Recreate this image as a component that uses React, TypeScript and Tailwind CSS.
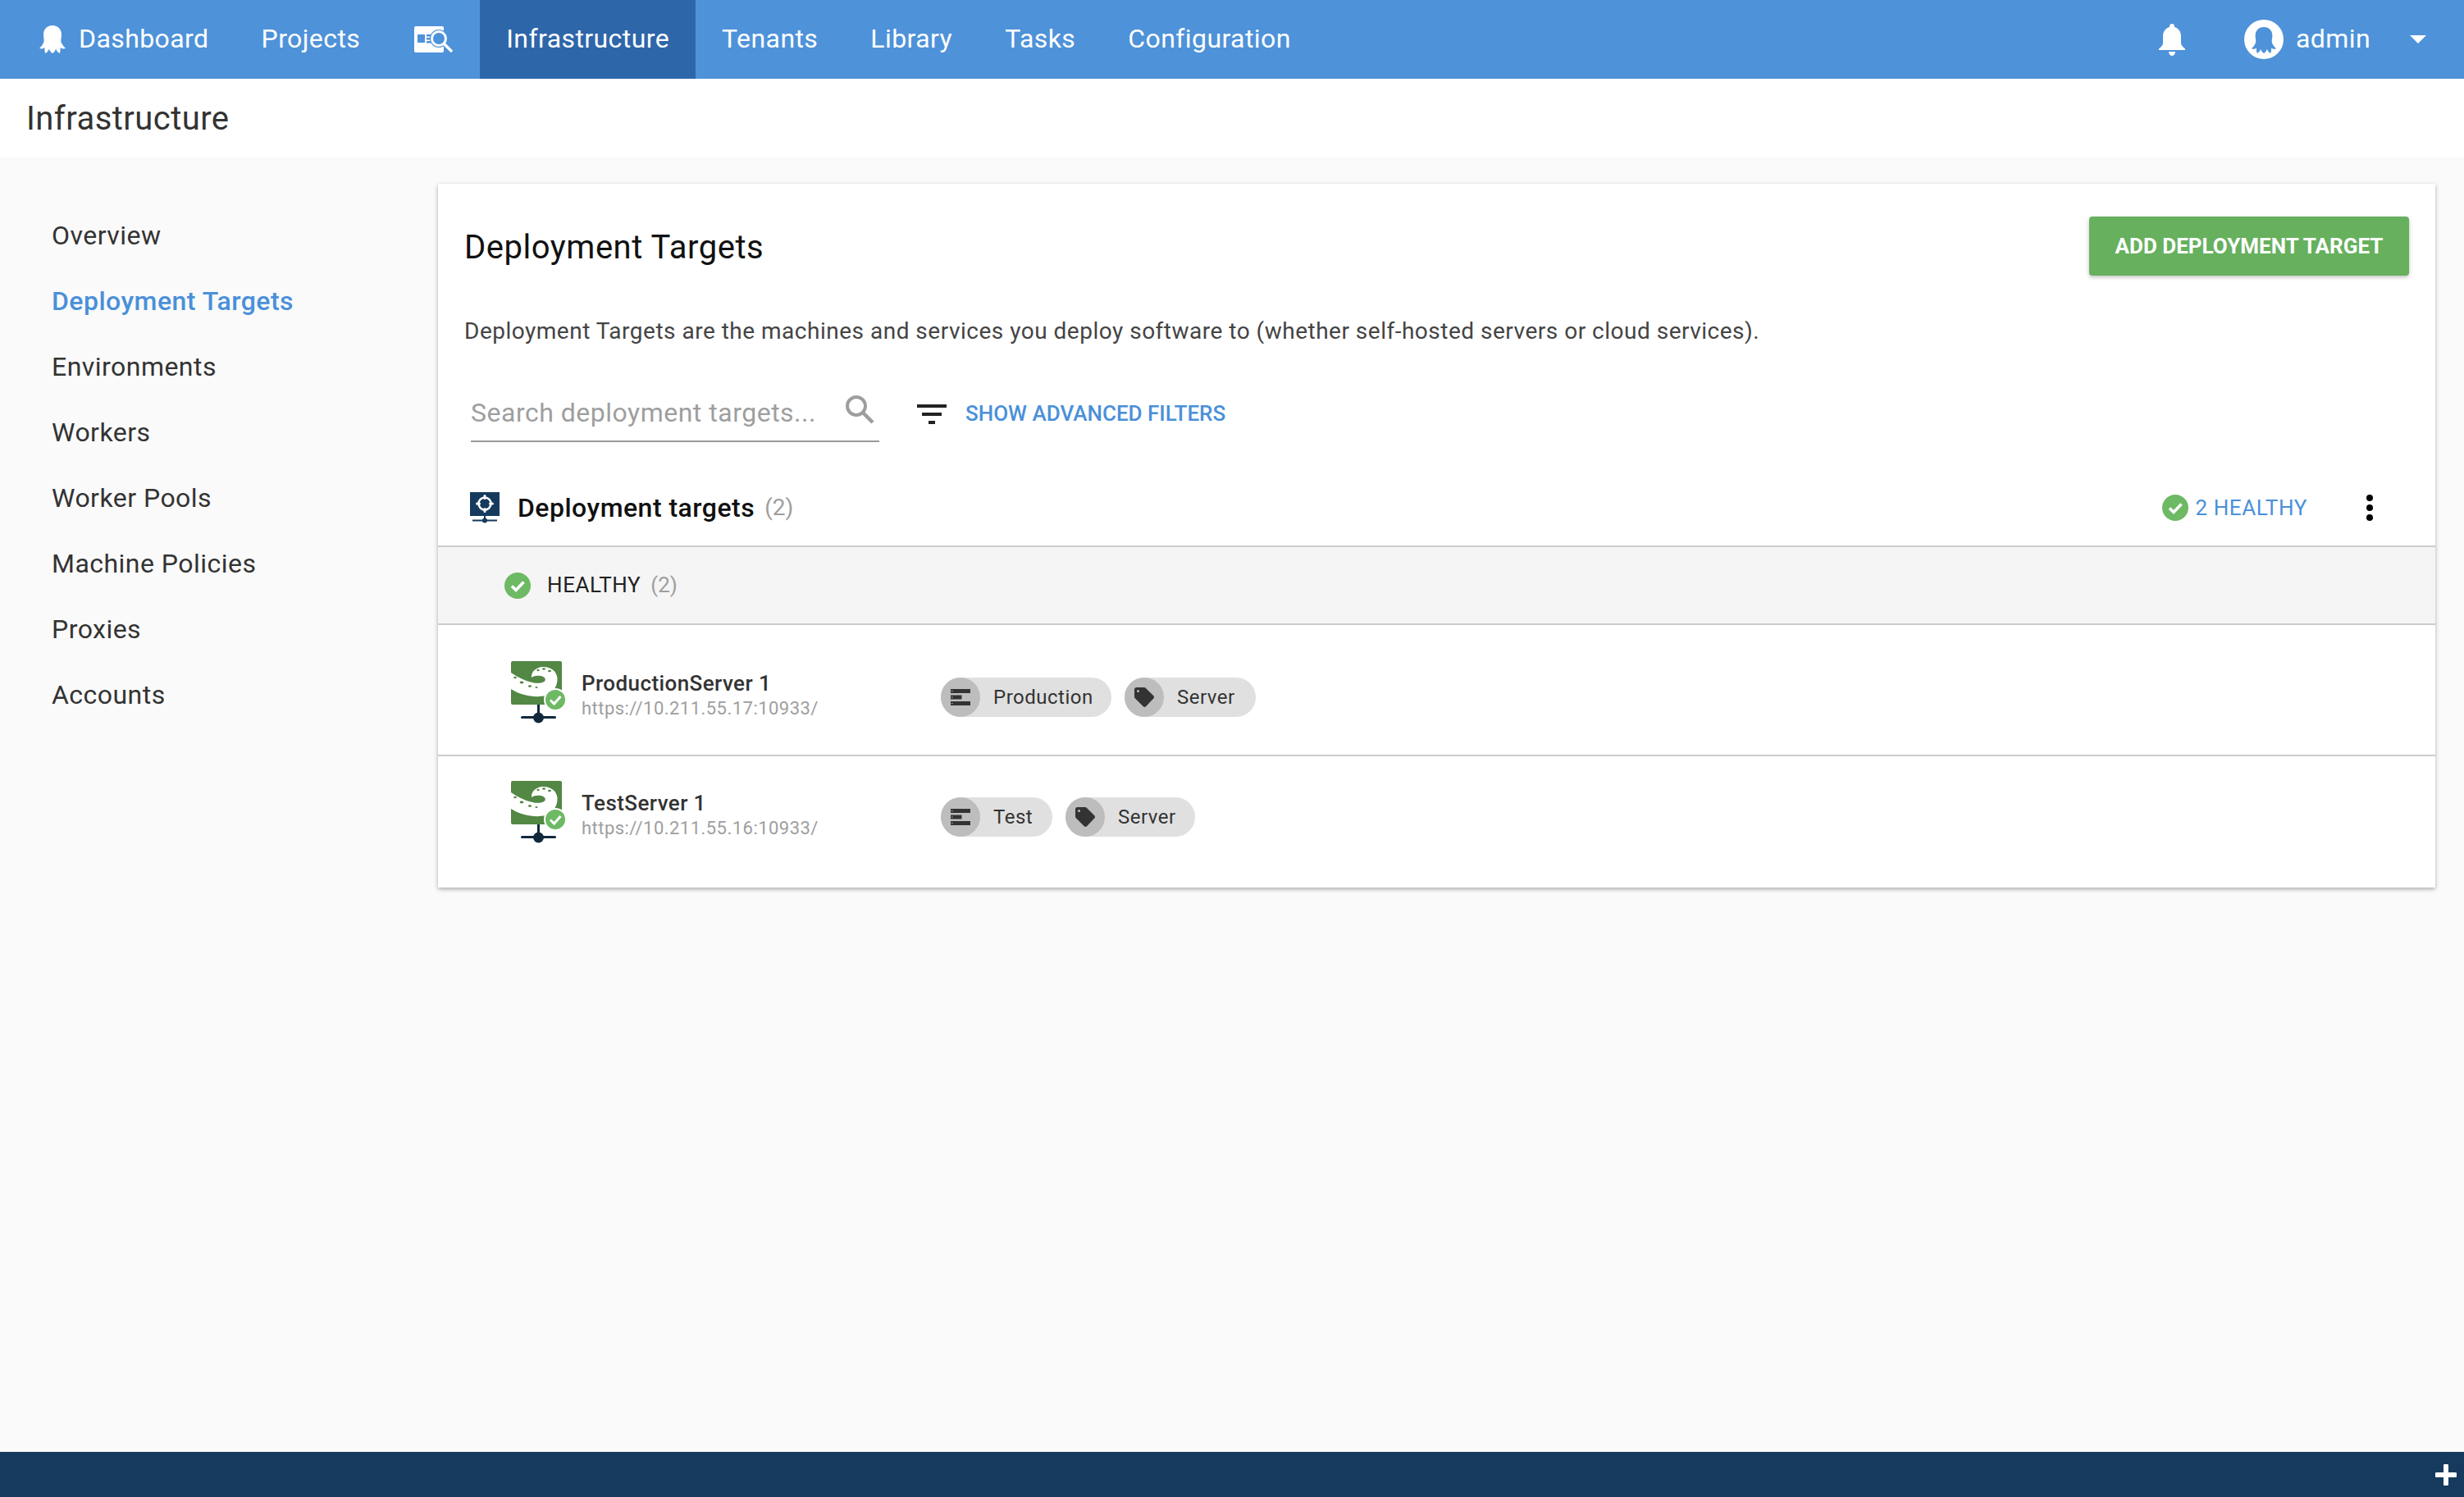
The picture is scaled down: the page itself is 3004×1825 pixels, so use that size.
import React from "react";

const Octopus = ({ className, fill = "#fff" }: { className?: string; fill?: string }) => (
  <svg viewBox="0 0 32 34" className={className}>
    <path
      fill={fill}
      d="M16 0C9 0 5 5 5 11C5 16 7 19 4 23C3 25 1.500 26.500 0 27.500C2 29 4.500 28.500 6.500 27C6.500 29.500 6 32 7.500 34C9.500 33 11 31 12 28.500C12.500 31 14 33 16 34C18 33 19.500 31 20 28.500C21 31 22.500 33 24.500 34C26 32 25.500 29.500 25.500 27C27.500 28.500 30 29 32 27.500C30.500 26.500 29 25 28 23C25 19 27 16 27 11C27 5 23 0 16 0Z"
    />
  </svg>
);

const Check = ({ className, stroke = "#fff" }: { className?: string; stroke?: string }) => (
  <svg viewBox="0 0 32 32" className={className}>
    <circle cx="16" cy="16" r="16" fill="#6DB964" />
    <path d="M9 16.500l5 5L23.500 11.500" fill="none" stroke={stroke} strokeWidth="3.600" />
  </svg>
);

const ServerIcon = () => (
  <svg viewBox="0 0 66 76" className="w-[66px] h-[76px] shrink-0">
    <rect x="0" y="0" width="62" height="53" rx="2" fill="#528744" />
    <path
      d="M0 14C9 20 17 24 26 26C32 27.500 38 27 41 24.500C43.500 21.500 40 18.500 36 18C32 17.500 27.500 18 25 20C24.500 13 30 8 38 7C48 6.500 56 12 56.500 21C57 30 52 38 42 42C30 45 12 42 0 34Z"
      fill="#fff"
    />
    <g fill="#528744">
      <ellipse cx="33" cy="11" rx="1.600" ry="1.200" />
      <ellipse cx="40" cy="9.500" rx="2" ry="1.300" />
      <ellipse cx="47" cy="12" rx="2" ry="1.300" />
      <ellipse cx="5" cy="20" rx="1.800" ry="1.200" />
      <ellipse cx="13" cy="26" rx="2.400" ry="1.400" />
      <ellipse cx="23" cy="30.500" rx="2.200" ry="1.300" />
      <ellipse cx="31" cy="32" rx="1.600" ry="1.100" />
    </g>
    <rect x="32" y="53" width="3" height="20" fill="#12293d" />
    <rect x="12" y="67" width="43" height="3" rx="1.500" fill="#12293d" />
    <circle cx="33.500" cy="69" r="6.500" fill="#12293d" />
    <circle cx="54" cy="47" r="14" fill="#fff" />
    <circle cx="54" cy="47" r="12" fill="#6DB964" />
    <path d="M48 47.500l4.500 4.500L60.500 43" fill="none" stroke="#fff" strokeWidth="3" />
  </svg>
);

const EnvGlyph = () => (
  <svg viewBox="0 0 24 20" className="w-6 h-5">
    <path
      fill="#333"
      fillRule="evenodd"
      d="M0 0h24v5H0zM1 2v1h1.500V2zM0 7.500h13.500v5H0zM1 9.500v1h1.500v-1zM0 15h24v5H0zM1 17v1h1.500v-1z"
    />
  </svg>
);

const TagGlyph = () => (
  <svg viewBox="0 0 24 24" className="w-6 h-6">
    <path
      fill="#333"
      fillRule="evenodd"
      d="M2.500 0H12c.600 0 1.200.200 1.700.700l9.600 9.600c.900.900.900 2.300 0 3.200l-9.300 9.800c-.900.900-2.300.900-3.200 0L1 13.500C.400 13 0 12.300 0 11.500V2.500C0 1.100 1.100 0 2.500 0zM4.500 3a1.500 1.500 0 100 3 1.500 1.500 0 000-3z"
    />
  </svg>
);

const Chip = ({ kind, label, width }: { kind: "env" | "tag"; label: string; width: string }) => (
  <div className={`flex items-center h-12 rounded-full bg-[#e0e0e0] ${width}`}>
    <div className="w-12 h-12 rounded-full bg-[#bdbdbd] flex items-center justify-center shrink-0">
      {kind === "env" ? <EnvGlyph /> : <TagGlyph />}
    </div>
    <span className="ml-4 text-[24px] text-[#333] leading-none tracking-[0.5px]">{label}</span>
  </div>
);

const navItem = "h-24 flex items-center pb-[2px] text-[32px] text-white tracking-[0.42px]";
const side = ["Overview", "Deployment Targets", "Environments", "Workers", "Worker Pools", "Machine Policies", "Proxies", "Accounts"];

export default function App() {
  return (
    <div className="w-[3004px] h-[1825px] flex flex-col bg-[#fafafa] overflow-hidden font-['Roboto',sans-serif]">
      <header className="h-24 shrink-0 bg-[#4e92d9] flex items-center">
        <div className="flex items-center pl-12">
          <Octopus className="w-8 h-[34px] mr-4" />
          <span className={navItem}>Dashboard</span>
          <span className={`${navItem} ml-16`}>Projects</span>
          <svg viewBox="0 0 48 32" className="w-12 h-8 ml-[66px] mr-8">
            <rect x="0" y="0" width="36" height="32" rx="2" fill="#fff" />
            <rect x="4" y="10" width="9" height="10" fill="#4e92d9" />
            <rect x="15" y="10" width="7" height="2.500" fill="#4e92d9" />
            <rect x="15" y="14" width="7" height="2.500" fill="#4e92d9" />
            <rect x="15" y="18" width="7" height="2.500" fill="#4e92d9" />
            <circle cx="30" cy="15" r="11" fill="#4e92d9" />
            <circle cx="30" cy="15" r="8.500" fill="#4e92d9" stroke="#fff" strokeWidth="3" />
            <path d="M36.500 21.500L46 31" stroke="#fff" strokeWidth="3.400" />
          </svg>
          <span className={`${navItem} px-8 bg-[#2e66aa]`}>Infrastructure</span>
          <span className={`${navItem} ml-8`}>Tenants</span>
          <span className={`${navItem} ml-16`}>Library</span>
          <span className={`${navItem} ml-16`}>Tasks</span>
          <span className={`${navItem} ml-16`}>Configuration</span>
        </div>
        <div className="ml-auto flex items-center">
          <svg viewBox="0 0 32 39" className="w-8 h-[39px]">
            <path
              fill="#fff"
              d="M16 0c1.700 0 3 1.200 3 2.800v1.100C24 5.200 27 9.500 27 15v9c0 2 2 4 5 6.500V32H0v-1.500C3 28 5 26 5 24v-9C5 9.500 8 5.200 13 3.900V2.800C13 1.200 14.300 0 16 0zM12 34h8c0 3-2 5-4 5s-4-2-4-5z"
            />
          </svg>
          <div className="w-12 h-12 rounded-full bg-white ml-[72px] flex items-center justify-center">
            <Octopus className="w-[34px] h-[32px] mt-[2px]" fill="#4e92d9" />
          </div>
          <span className={`${navItem} ml-[15px]`}>admin</span>
          <svg viewBox="0 0 20 10" className="w-5 h-[10px] ml-[48px] mr-[46px]">
            <path d="M0 0h20L10 10z" fill="#fff" />
          </svg>
        </div>
      </header>

      <div className="h-24 shrink-0 bg-white flex items-center pl-8">
        <h1 className="text-[40px] text-[#333] font-normal tracking-[0.45px] mt-[1px]">Infrastructure</h1>
      </div>

      <div className="flex-1 flex items-start">
        <nav className="w-[534px] shrink-0 pl-[63px] pt-[55px] flex flex-col">
          {side.map((s) => (
            <a
              key={s}
              className={`h-20 flex items-center text-[32px] tracking-[0.47px] ${
                s === "Deployment Targets" ? "text-[#4a90d9] font-medium" : "text-[#333]"
              }`}
            >
              {s}
            </a>
          ))}
        </nav>

        <main className="w-[2435px] mt-8 bg-white shadow-[0_2px_5px_rgba(0,0,0,0.32)]">
          <div className="pl-8 pr-8 pt-10 flex items-center justify-between">
            <h2 className="text-[40px] font-normal text-[#111] tracking-[0.53px] mt-[3px]">Deployment Targets</h2>
            <button className="w-[390px] h-[72px] rounded bg-[#66b05e] text-white text-[26px] font-bold shadow-[0_2px_5px_rgba(0,0,0,0.25)]">
              ADD DEPLOYMENT TARGET
            </button>
          </div>
          <p className="pl-8 mt-[50px] text-[28px] leading-9 text-[#444] tracking-[0.5px]">
            Deployment Targets are the machines and services you deploy software to (whether self-hosted servers or cloud
            services).
          </p>
          <div className="flex items-center pl-10 mt-[46px]">
            <div className="relative w-[498px] h-[71px] border-b-2 border-[#999] flex items-center">
              <span className="text-[32px] text-[#9e9e9e] tracking-[0.5px]">Search deployment targets...</span>
              <svg viewBox="0 0 36 36" className="absolute right-[6px] top-[13px] w-9 h-9">
                <circle cx="14" cy="14" r="11" fill="none" stroke="#9e9e9e" strokeWidth="4" />
                <path d="M22 22l12 12" stroke="#9e9e9e" strokeWidth="4.500" />
              </svg>
            </div>
            <svg viewBox="0 0 36 24" className="w-9 h-6 ml-[46px] mt-[2px]">
              <path fill="#222" d="M0 0h36v4H0zM6 10h24v4H6zM14 20h8v4h-8z" />
            </svg>
            <span className="ml-[23px] text-[26px] font-medium text-[#4a90d9] mt-[2px]">SHOW ADVANCED FILTERS</span>
          </div>
          <div className="flex items-center h-[94px] pl-[39px] mt-[34px] pr-[76px] border-b-2 border-[#ccc]">
            <svg viewBox="0 0 36 38" className="w-9 h-[38px]">
              <rect width="36" height="29" fill="#153a5d" />
              <circle cx="18" cy="14" r="7.500" fill="none" stroke="#fff" strokeWidth="2.500" />
              <g fill="#fff">
                <rect x="16.500" y="3" width="3" height="6" rx="1.500" />
                <rect x="16.500" y="19" width="3" height="6" rx="1.500" />
                <rect x="7" y="12.500" width="6" height="3" rx="1.500" />
                <rect x="23" y="12.500" width="6" height="3" rx="1.500" />
              </g>
              <rect x="17" y="29" width="2" height="7" fill="#153a5d" />
              <rect x="3" y="33.500" width="30" height="2" fill="#153a5d" />
              <circle cx="18" cy="34.500" r="3" fill="#153a5d" />
            </svg>
            <span className="ml-[22px] text-[32px] font-medium text-[#111] tracking-[0.48px]">Deployment targets</span>
            <span className="ml-[12px] text-[28px] text-[#9e9e9e]">(2)</span>
            <Check className="w-8 h-8 ml-auto" />
            <span className="ml-2 text-[26px] text-[#4a90d9] tracking-[0.6px]">2 HEALTHY</span>
            <div className="ml-[72px] w-2 flex flex-col gap-1">
              <span className="w-2 h-2 rounded-full bg-black" />
              <span className="w-2 h-2 rounded-full bg-black" />
              <span className="w-2 h-2 rounded-full bg-black" />
            </div>
          </div>
          <div className="h-[95px] bg-[#f5f5f5] flex items-center pl-[81px] border-b-2 border-[#ccc]">
            <Check className="w-8 h-8" />
            <span className="ml-5 text-[26px] text-[#222] tracking-[0.6px]">HEALTHY</span>
            <span className="ml-3 text-[26px] text-[#9e9e9e]">(2)</span>
          </div>
          <div className="h-[160px] border-b-2 border-[#ccc] pt-[44px] pl-[89px] flex items-start">
            <ServerIcon />
            <div className="w-[438px] ml-5 pt-[11px]">
              <div className="text-[26px] leading-[32px] font-medium text-[#333] tracking-[0.42px]">ProductionServer 1</div>
              <div className="text-[22px] leading-[30px] text-[#9e9e9e] tracking-[0.47px]">https://10.211.55.17:10933/</div>
            </div>
            <div className="flex gap-4 pt-[20px]">
              <Chip kind="env" label="Production" width="w-[208px]" />
              <Chip kind="tag" label="Server" width="w-[160px]" />
            </div>
          </div>
          <div className="h-[160px] pt-[30px] pl-[89px] flex items-start">
            <ServerIcon />
            <div className="w-[438px] ml-5 pt-[11px]">
              <div className="text-[26px] leading-[32px] font-medium text-[#333] tracking-[0.42px]">TestServer 1</div>
              <div className="text-[22px] leading-[30px] text-[#9e9e9e] tracking-[0.47px]">https://10.211.55.16:10933/</div>
            </div>
            <div className="flex gap-4 pt-[20px]">
              <Chip kind="env" label="Test" width="w-[136px]" />
              <Chip kind="tag" label="Server" width="w-[158px]" />
            </div>
          </div>
        </main>
      </div>

      <footer className="h-[55px] shrink-0 bg-[#153a5d] flex items-center justify-end pr-[9px]">
        <svg viewBox="0 0 26 26" className="w-[26px] h-[26px]">
          <path d="M13 2v22M2 13h22" stroke="#fff" strokeWidth="6" strokeLinecap="round" />
        </svg>
      </footer>
    </div>
  );
}
